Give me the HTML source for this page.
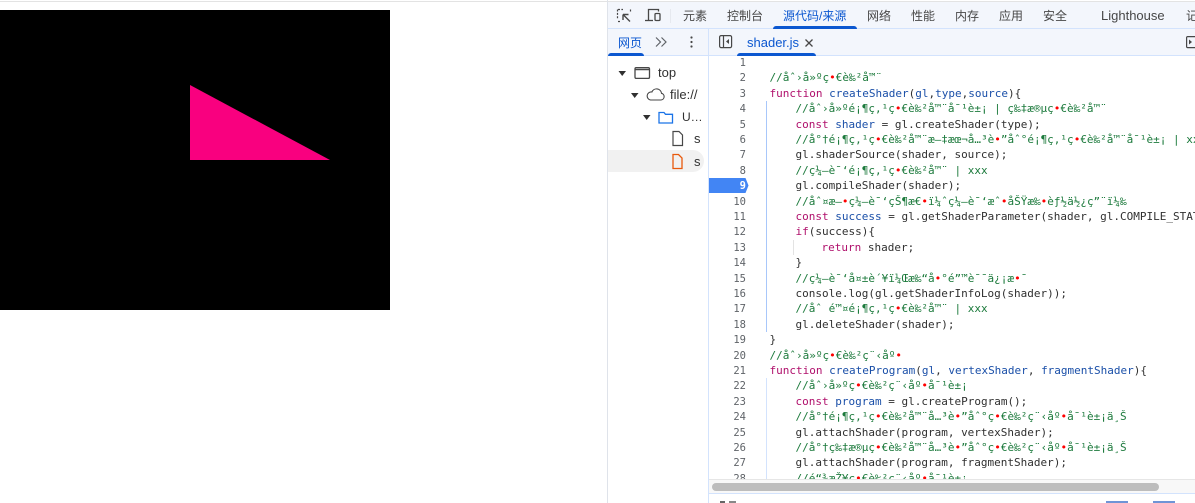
<!DOCTYPE html>
<html><head><meta charset="utf-8">
<style>
html,body{margin:0;padding:0;width:1195px;height:503px;overflow:hidden;background:#fff}
*{box-sizing:border-box}
.abs{position:absolute}
body{font-family:"Liberation Sans","Noto Sans CJK SC",sans-serif;color:#3c4043}
.tab{position:absolute;top:8px;font-size:12px;line-height:16px;color:#474747;white-space:nowrap}
.ln{position:absolute;left:709px;width:37px;text-align:right;font:10.5px/15px "DejaVu Sans Mono",monospace;color:#5f6368;height:15px;margin-top:1px}
.cl{position:absolute;font:11px/15px "DejaVu Sans Mono","Liberation Mono",monospace;color:#303030;white-space:pre;height:15px;margin-left:-.5px}
.k{color:#b0106c}.b{color:#1a4fa8}.c{color:#1c7a3c}.r{color:#f00}
</style></head><body>
<div class="abs" style="left:0;top:1px;width:607px;height:1px;background:#e3e3e3"></div>
<div class="abs" style="left:0;top:10px;width:390px;height:300px;background:#000"></div>
<svg class="abs" style="left:0;top:10px" width="390" height="300"><polygon points="190,75 190,150 330,150" fill="#f9007f"/></svg>

<div class="abs" style="left:607px;top:0;width:588px;height:503px;background:#fff;border-left:1px solid #dfe3ea;overflow:hidden"></div>
<div class="abs" style="left:608px;top:1px;width:587px;height:28px;background:#f3f6fc;border-top:1px solid #e3e3e3;border-bottom:1px solid #d3e3fd"></div>
<div class="abs" style="left:608px;top:29px;width:587px;height:27px;background:#f3f6fc;border-bottom:1px solid #d3e3fd"></div>
<div class="abs" style="left:708px;top:29px;width:1px;height:474px;background:#d3e3fd"></div>

<svg class="abs" style="left:608px;top:0" width="80" height="28" fill="none" stroke="#474747">
<path d="M10 9.5h5M10 21.500h3M9.500 9.500v9M22.500 9.500v3" stroke-dasharray="2 1.4" stroke-width="1.2"/>
<path d="M15 14.500h5.500M15 14.500v5.500M15.500 15l6.500 6.500" stroke-width="1.4"/>
<path d="M40.500 20V9.500h10v2" stroke-width="1.3"/><path d="M37 20.500h8" stroke-width="1.3"/><rect x="47" y="13.500" width="5" height="7" rx="1" stroke-width="1.3"/>
<path d="M62.500 9v14" stroke="#e6e9ef"/>
</svg>
<div class="tab" style="left:683px">元素</div>
<div class="tab" style="left:727px">控制台</div>
<div class="tab" style="left:783px;color:#0b57d0">源代码/来源</div>
<div class="abs" style="left:773px;top:26px;width:84px;height:3px;background:#0b57d0;border-radius:3px 3px 0 0"></div>
<div class="tab" style="left:867px">网络</div>
<div class="tab" style="left:911px">性能</div>
<div class="tab" style="left:955px">内存</div>
<div class="tab" style="left:999px">应用</div>
<div class="tab" style="left:1043px">安全</div>
<div class="tab" style="left:1101px;font-size:13px">Lighthouse</div>
<div class="tab" style="left:1186px">记录器</div>

<div class="tab" style="left:618px;top:35px;color:#0b57d0">网页</div>
<div class="abs" style="left:608px;top:53px;width:36px;height:3px;background:#0b57d0;border-radius:3px 3px 0 0"></div>
<svg class="abs" style="left:650px;top:32px" width="50" height="20" fill="none" stroke="#5f6368" stroke-width="1.2">
<path d="M6 5.500l4.500 4.500-4.500 4.500M11.500 5.500l4.500 4.500-4.500 4.500"/>
<circle cx="41.500" cy="5.500" r="1.100" fill="#474747" stroke="none"/><circle cx="41.500" cy="10" r="1.100" fill="#474747" stroke="none"/><circle cx="41.500" cy="14.500" r="1.100" fill="#474747" stroke="none"/>
</svg>
<svg class="abs" style="left:717px;top:33px" width="18" height="18" fill="none" stroke="#474747" stroke-width="1.2"><rect x="2.600" y="2.600" width="12" height="12" rx="1.500"/><path d="M6.500 3v11"/><path d="M12 6v5l-3-2.500z" fill="#474747" stroke="none"/></svg>
<div class="abs" style="left:747px;top:35px;font-size:13px;line-height:16px;color:#0b57d0">shader.js</div>
<svg class="abs" style="left:804px;top:38px" width="10" height="10" fill="none" stroke="#474747" stroke-width="1.3"><path d="M1.500 1.500l7 7M8.500 1.500l-7 7"/></svg>
<div class="abs" style="left:737px;top:53px;width:79px;height:3px;background:#0b57d0;border-radius:3px 3px 0 0"></div>
<svg class="abs" style="left:1185px;top:35px" width="10" height="14" fill="none" stroke="#474747" stroke-width="1.2"><rect x="1.600" y="1.600" width="12" height="11" rx="1"/><path d="M4 4.500v5l3-2.500z" fill="#474747" stroke="none"/></svg>

<svg class="abs" style="left:608px;top:56px" width="100" height="120" fill="none" stroke="#474747" stroke-width="1.2">
<path d="M10.500 15h7.500l-3.800 5z" fill="#303030" stroke="none"/>
<rect x="27" y="11.600" width="14.500" height="10.800" rx="1.300" stroke-width="1.300"/><path d="M27 13.500h14.500" stroke-width="1.500"/>
<path d="M23 37h7.500l-3.800 5z" fill="#303030" stroke="none"/>
<path d="M42.500 44h10.500a3.400 3.400 0 0 0 .5-6.700a5 5 0 0 0-9.600-1.300a4 4 0 0 0-1.400 8z" stroke-width="1.100"/>
<path d="M35 59h7.500l-3.800 5z" fill="#303030" stroke="none"/>
<path d="M51 56.500h5l1.500 1.800h7v8.700h-13.500z" stroke="#1a73e8" stroke-width="1.300"/>
<path d="M65 75.500h6l3.500 3.500v10.500h-9.500z" stroke="#474747" stroke-width="1.200"/>
</svg>
<div class="abs" style="left:608px;top:150px;width:96px;height:22px;background:#f1f1f1;border-radius:0 11px 11px 0"></div>
<svg class="abs" style="left:670px;top:153px" width="14" height="17" fill="none"><path d="M3 1.500h5.500l3.500 3.500v10.500h-9z" stroke="#e8590c" stroke-width="1.300"/></svg>
<div class="abs" style="left:658px;top:65px;font-size:13px;line-height:16px;color:#303030">top</div>
<div class="abs" style="left:670px;top:87px;font-size:13px;line-height:16px;color:#303030">file://</div>
<div class="abs" style="left:682px;top:109px;font-size:12px;line-height:16px;color:#303030">U…</div>
<div class="abs" style="left:694px;top:131px;font-size:13px;line-height:16px;color:#303030">s</div>
<div class="abs" style="left:694px;top:154px;font-size:13px;line-height:16px;color:#303030">s</div>

<div class="abs" style="left:709px;top:178px;width:35px;height:15px;background:#4285f4"></div>
<svg class="abs" style="left:744px;top:178px" width="6" height="15"><path d="M0 0h1.500l3 7.500-3 7.500h-1.500z" fill="#4285f4"/></svg>
<div class="abs" style="left:766px;top:101px;width:1px;height:231px;background:#a8c7fa"></div>
<div class="abs" style="left:766px;top:378px;width:1px;height:102px;background:#d3e3fd"></div>
<div class="abs" style="left:793px;top:240px;width:1px;height:15px;background:#e3e3e3"></div>

<div class="ln" style="top:55px">1</div><div class="ln" style="top:70px">2</div><div class="ln" style="top:86px">3</div><div class="ln" style="top:101px">4</div><div class="ln" style="top:117px">5</div><div class="ln" style="top:132px">6</div><div class="ln" style="top:147px">7</div><div class="ln" style="top:163px">8</div><div class="ln" style="top:178px;color:#fff;font-weight:bold">9</div><div class="ln" style="top:194px">10</div><div class="ln" style="top:209px">11</div><div class="ln" style="top:224px">12</div><div class="ln" style="top:240px">13</div><div class="ln" style="top:255px">14</div><div class="ln" style="top:271px">15</div><div class="ln" style="top:286px">16</div><div class="ln" style="top:301px">17</div><div class="ln" style="top:317px">18</div><div class="ln" style="top:332px">19</div><div class="ln" style="top:348px">20</div><div class="ln" style="top:363px">21</div><div class="ln" style="top:378px">22</div><div class="ln" style="top:394px">23</div><div class="ln" style="top:409px">24</div><div class="ln" style="top:425px">25</div><div class="ln" style="top:440px">26</div><div class="ln" style="top:455px">27</div><div class="ln" style="top:471px;height:8px;overflow:hidden">28</div>

<div class="cl c" style="left:770px;top:70px">//åˆ›å»ºç<span class="r">•</span>€è‰²å™¨</div>
<div class="cl" style="left:770px;top:86px"><span class="k">function</span> <span class="b">createShader</span>(<span class="b">gl</span>,<span class="b">type</span>,<span class="b">source</span>){</div>
<div class="cl c" style="left:796px;top:101px">//åˆ›å»ºé¡¶ç‚¹ç<span class="r">•</span>€è‰²å™¨å¯¹è±¡ | ç‰‡æ®µç<span class="r">•</span>€è‰²å™¨</div>
<div class="cl" style="left:796px;top:117px"><span class="k">const</span> <span class="b">shader</span> = gl.createShader(type);</div>
<div class="cl c" style="left:796px;top:132px;width:399px;overflow:hidden">//å°†é¡¶ç‚¹ç<span class="r">•</span>€è‰²å™¨æ–‡æœ¬å…³è<span class="r">•</span>”åˆ°é¡¶ç‚¹ç<span class="r">•</span>€è‰²å™¨å¯¹è±¡ | xxx</div>
<div class="cl" style="left:796px;top:147px">gl.shaderSource(shader, source);</div>
<div class="cl c" style="left:796px;top:163px">//ç¼–è¯‘é¡¶ç‚¹ç<span class="r">•</span>€è‰²å™¨ | xxx</div>
<div class="cl" style="left:796px;top:178px">gl.compileShader(shader);</div>
<div class="cl c" style="left:796px;top:194px">//åˆ¤æ–<span class="r">•</span>ç¼–è¯‘çŠ¶æ€<span class="r">•</span>ï¼ˆç¼–è¯‘æˆ<span class="r">•</span>åŠŸæ‰<span class="r">•</span>èƒ½ä½¿ç”¨ï¼‰</div>
<div class="cl" style="left:796px;top:209px;width:399px;overflow:hidden"><span class="k">const</span> <span class="b">success</span> = gl.getShaderParameter(shader, gl.COMPILE_STATUS);</div>
<div class="cl" style="left:796px;top:224px"><span class="k">if</span>(success){</div>
<div class="cl" style="left:822px;top:240px"><span class="k">return</span> shader;</div>
<div class="cl" style="left:796px;top:255px">}</div>
<div class="cl c" style="left:796px;top:271px">//ç¼–è¯‘å¤±è´¥ï¼Œæ‰“å<span class="r">•</span>°é”™è¯¯ä¿¡æ<span class="r">•</span>¯</div>
<div class="cl" style="left:796px;top:286px">console.log(gl.getShaderInfoLog(shader));</div>
<div class="cl c" style="left:796px;top:301px">//åˆ é™¤é¡¶ç‚¹ç<span class="r">•</span>€è‰²å™¨ | xxx</div>
<div class="cl" style="left:796px;top:317px">gl.deleteShader(shader);</div>
<div class="cl" style="left:770px;top:332px">}</div>
<div class="cl c" style="left:770px;top:348px">//åˆ›å»ºç<span class="r">•</span>€è‰²ç¨‹åº<span class="r">•</span></div>
<div class="cl" style="left:770px;top:363px"><span class="k">function</span> <span class="b">createProgram</span>(<span class="b">gl</span>, <span class="b">vertexShader</span>, <span class="b">fragmentShader</span>){</div>
<div class="cl c" style="left:796px;top:378px">//åˆ›å»ºç<span class="r">•</span>€è‰²ç¨‹åº<span class="r">•</span>å¯¹è±¡</div>
<div class="cl" style="left:796px;top:394px"><span class="k">const</span> <span class="b">program</span> = gl.createProgram();</div>
<div class="cl c" style="left:796px;top:409px">//å°†é¡¶ç‚¹ç<span class="r">•</span>€è‰²å™¨å…³è<span class="r">•</span>”åˆ°ç<span class="r">•</span>€è‰²ç¨‹åº<span class="r">•</span>å¯¹è±¡ä¸Š</div>
<div class="cl" style="left:796px;top:425px">gl.attachShader(program, vertexShader);</div>
<div class="cl c" style="left:796px;top:440px">//å°†ç‰‡æ®µç<span class="r">•</span>€è‰²å™¨å…³è<span class="r">•</span>”åˆ°ç<span class="r">•</span>€è‰²ç¨‹åº<span class="r">•</span>å¯¹è±¡ä¸Š</div>
<div class="cl" style="left:796px;top:455px">gl.attachShader(program, fragmentShader);</div>
<div class="cl c" style="left:796px;top:471px;height:8px;overflow:hidden">//é“¾æŽ¥ç<span class="r">•</span>€è‰²ç¨‹åº<span class="r">•</span>å¯¹è±¡</div>

<div class="abs" style="left:709px;top:479px;width:486px;height:14px;background:#f8f8f8;border-top:1px solid #e6e6e6"></div>
<div class="abs" style="left:712px;top:483px;width:447px;height:8px;background:#bdbdbd;border-radius:4px"></div>
<div class="abs" style="left:709px;top:493px;width:486px;height:1px;background:#d3e3fd"></div>
<div class="abs" style="left:720px;top:501px;width:5px;height:2px;background:#666"></div>
<div class="abs" style="left:729px;top:501px;width:7px;height:2px;background:#888"></div>
<div class="abs" style="left:1106px;top:501px;width:22px;height:2px;background:#6f94d6"></div>
<div class="abs" style="left:1153px;top:501px;width:22px;height:2px;background:#6f94d6"></div>
</body></html>
